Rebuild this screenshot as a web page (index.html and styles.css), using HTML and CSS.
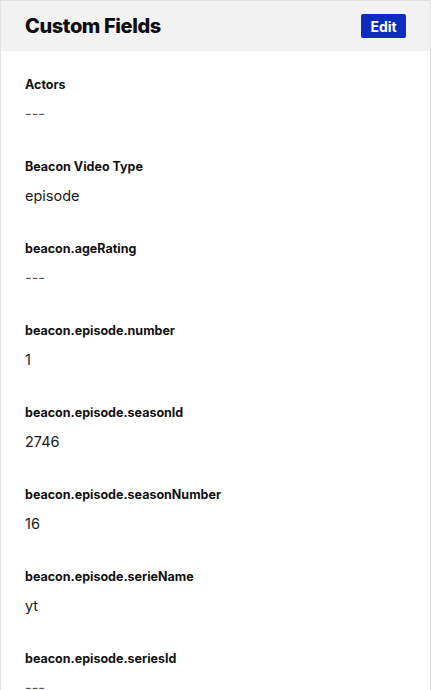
FILE: index.html
```html
<!DOCTYPE html>
<html lang="en">
<head>
<meta charset="utf-8">
<title>Custom Fields</title>
<link rel="stylesheet" href="styles.css">
</head>
<body>
<section class="card">
  <header class="card-header">
    <h2 class="card-title">Custom Fields</h2>
    <button class="edit-btn" type="button">Edit</button>
  </header>
  <div class="card-body">
    <div class="field"><div class="label">Actors</div><div class="value empty">---</div></div>
    <div class="field"><div class="label">Beacon Video Type</div><div class="value">episode</div></div>
    <div class="field"><div class="label">beacon.ageRating</div><div class="value empty">---</div></div>
    <div class="field"><div class="label">beacon.episode.number</div><div class="value">1</div></div>
    <div class="field"><div class="label">beacon.episode.seasonId</div><div class="value">2746</div></div>
    <div class="field"><div class="label">beacon.episode.seasonNumber</div><div class="value">16</div></div>
    <div class="field"><div class="label">beacon.episode.serieName</div><div class="value">yt</div></div>
    <div class="field"><div class="label">beacon.episode.seriesId</div><div class="value empty">---</div></div>
  </div>
</section>
</body>
</html>
```
FILE: styles.css
```css
* { box-sizing: border-box; }
html, body { margin: 0; padding: 0; background: #fff; }
body {
  font-family: Inter, "Noto Sans", "Liberation Sans", sans-serif;
  color: #111;
  height: 690px;
  overflow: hidden;
}
.card {
  width: 431px;
  border: 1px solid #e2e2e2;
  border-bottom: none;
  min-height: 690px;
}
.card-header {
  display: flex;
  align-items: center;
  justify-content: space-between;
  height: 50px;
  padding: 0 24px 0 24px;
  background: #f2f2f2;
}
.card-title {
  margin: 0;
  font-size: 20px;
  font-weight: 800;
  letter-spacing: -0.4px;
  color: #0d0d12;
}
.edit-btn {
  border: none;
  background: #0a2cbf;
  color: #fff;
  font-family: inherit;
  font-size: 14px;
  font-weight: 700;
  height: 24px;
  width: 45px;
  padding: 0;
  border-radius: 2px;
}
.card-body {
  display: flex;
  flex-direction: column;
  gap: 35px;
  padding: 25px 24px 0 24px;
}
.field {
  display: flex;
  flex-direction: column;
  gap: 11px;
}
.label {
  font-size: 12.5px;
  font-weight: 700;
  line-height: 18px;
  color: #111;
}
.value {
  font-size: 14.5px;
  line-height: 18px;
  color: #1a1a1a;
}
.value.empty { color: #555; }
```
